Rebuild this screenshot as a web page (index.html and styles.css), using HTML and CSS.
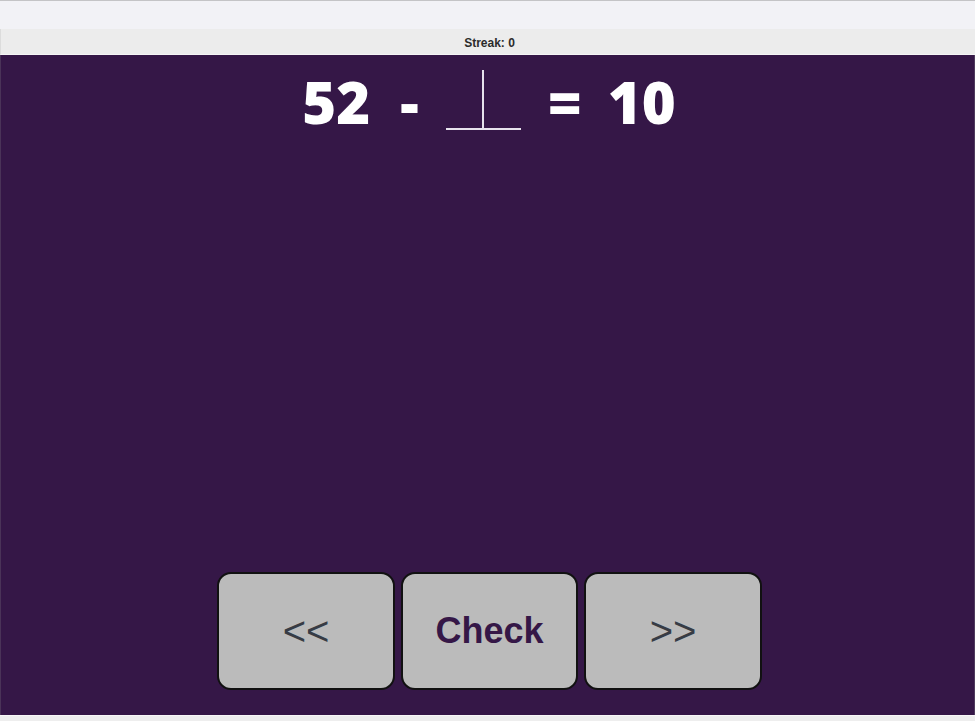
FILE: index.html
```html
<!DOCTYPE html>
<html lang="en">
<head>
<meta charset="utf-8">
<title>Streak</title>
<link rel="stylesheet" href="styles.css">
</head>
<body>
<div class="topbar"></div>
<header class="header"><span class="streak">Streak: 0</span></header>
<main class="stage">
  <div class="equation">
    <span class="term">52</span>
    <span class="op op-minus">-</span>
    <span class="answer-wrap">
      <input class="answer" type="text" aria-label="answer">
      <span class="caret"></span>
    </span>
    <span class="op">=</span>
    <span class="term term-last">10</span>
  </div>
  <div class="controls">
    <button class="btn btn-nav" type="button">&lt;&lt;</button>
    <button class="btn btn-check" type="button">Check</button>
    <button class="btn btn-nav" type="button">&gt;&gt;</button>
  </div>
</main>
<div class="footer"></div>
</body>
</html>
```
FILE: styles.css
```css
html, body {
  margin: 0;
  padding: 0;
}
body {
  width: 975px;
  height: 721px;
  overflow: hidden;
  background: #eeeeee;
  font-family: "Liberation Sans", Arial, sans-serif;
  display: flex;
  flex-direction: column;
}
.topbar {
  height: 28px;
  background: #f2f2f6;
  border-top: 1px solid #c4c4c6;
  flex: none;
}
.header {
  height: 25px;
  background: #ececec;
  border-bottom: 1px solid #f6f6f6;
  border-left: 1px solid #dcdcdc;
  display: flex;
  align-items: center;
  justify-content: center;
  flex: none;
}
.streak {
  font-size: 12px;
  font-weight: bold;
  color: #2b2b2b;
  padding-left: 3px;
  padding-top: 3px;
}
.stage {
  height: 660px;
  flex: none;
  background: #351747;
  border-left: 1px solid #4a3358;
  border-right: 1px solid #4e3a5c;
  box-sizing: border-box;
  display: flex;
  flex-direction: column;
  justify-content: space-between;
}
.equation {
  display: flex;
  justify-content: center;
  align-items: flex-start;
  gap: 27px;
  padding-top: 7px;
  padding-left: 3px;
  font-family: "Open Sans", sans-serif;
  font-weight: 800;
  font-size: 58px;
  color: #ffffff;
  line-height: 80px;
}
.term, .op {
  display: block;
}
.op-minus {
  margin-left: 3px;
}
.term-last {
  margin-left: -1px;
}
.answer-wrap {
  position: relative;
  display: block;
  width: 75px;
  height: 60px;
  margin-top: 8px;
}
.answer {
  display: block;
  width: 75px;
  height: 60px;
  box-sizing: border-box;
  margin: 0;
  padding: 0;
  border: none;
  border-bottom: 2px solid #e8e4ee;
  background: transparent;
  outline: none;
  color: #fff;
  font: inherit;
  text-align: center;
}
.caret {
  position: absolute;
  left: 36px;
  top: 0;
  width: 2px;
  height: 59px;
  background: #e6e2ec;
}
.controls {
  display: flex;
  justify-content: center;
  gap: 6px;
  padding-left: 4px;
  margin-bottom: 25px;
}
.btn {
  width: 178px;
  height: 118px;
  box-sizing: border-box;
  border: 2px solid #111111;
  border-radius: 14px;
  background: #bbbbbb;
  font-family: "Liberation Sans", Arial, sans-serif;
  padding: 0;
  cursor: pointer;
}
.btn-nav {
  font-size: 40px;
  font-weight: normal;
  color: #373c45;
}
.btn-check {
  width: 177px;
  font-size: 36px;
  font-weight: bold;
  color: #351747;
}
.footer {
  flex: 1;
  background: #eeeeee;
  border-top: 1px solid #f8f8f8;
}
```
